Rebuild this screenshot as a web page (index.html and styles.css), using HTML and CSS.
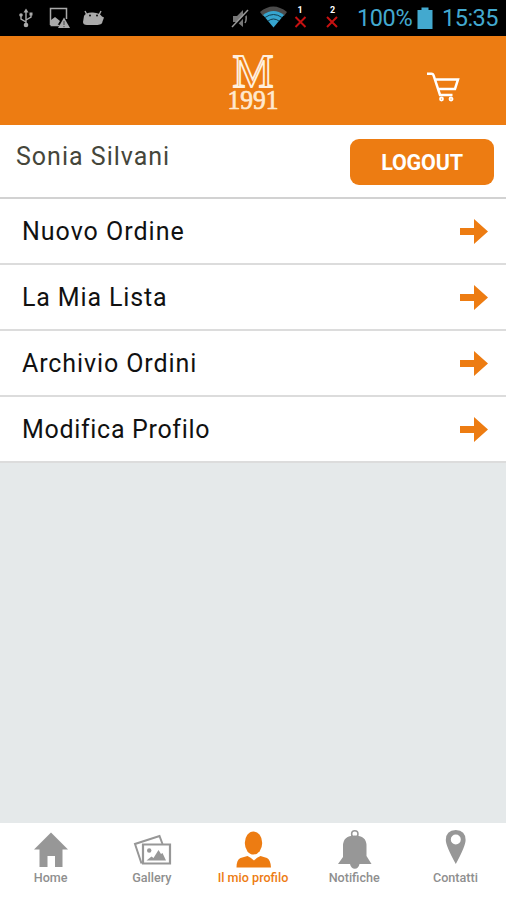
FILE: index.html
```html
<!DOCTYPE html>
<html lang="it">
<head>
  <meta charset="utf-8">
  <title>Il mio profilo</title>
  <link rel="stylesheet" href="styles.css">
</head>
<body>
  <!-- Status bar -->
  <div class="status-bar">
    <svg class="status-icons" width="110" height="36" viewBox="0 0 110 36">
      <g fill="none" stroke="#aaa" stroke-width="1.4">
        <path d="M26 11v14M26 22l-5-3v-4M26 20l5-3v-3"/>
        <path d="M50.500 25V8.500h16V19M50.500 25.500h9" stroke-width="1.500"/>
        <path d="M87 15l-2-4M99 15l2-4"/>
      </g>
      <g fill="#aaa">
        <path d="M23.500 12.500 26 8.500l2.500 4z"/>
        <circle cx="26" cy="25" r="2.300"/>
        <circle cx="21" cy="15" r="1.800"/>
        <path d="M29.500 12.500h3v3h-3z"/>
        <path d="M51 25v-5l4-3 5 4-3 5z"/>
        <path d="M64 17.500 70 28H58z"/>
        <path d="M84 16q2-4 9-3.500t9 4l2 1-1.500 4q0 3-5 3.500H87q-4 0-4-3z"/>
      </g>
      <path d="M64 21v4M64 26v1.200" stroke="#444" stroke-width="1"/>
      <g fill="#111"><circle cx="90" cy="15.500" r="1"/><circle cx="97" cy="15.500" r="1"/></g>
    </svg>
    <svg class="status-icons" width="120" height="36" viewBox="225 0 120 36">
      <path d="M233 16h4l6-6v17l-6-5h-4z" fill="#777"/>
      <path d="M245 14q2.500 4 0 9" fill="none" stroke="#888" stroke-width="1.500"/>
      <path d="M233 28l16-17" stroke="#000" stroke-width="2"/>
      <path d="M232 27l16-17" stroke="#999" stroke-width="1.500"/>
      <path d="M260 12q13-11 27 0l-3 4q-10-8-21 0z" fill="#4b4b4b"/>
      <path d="M263 15q10.500-8 21 0L273.500 27.500z" fill="#36a5cf"/>
      <path d="M265 17.500q8.500-6 17 0M268 21q5.500-4 11 0" fill="none" stroke="#123d4d" stroke-width="1"/>
      <path d="M295.500 17l10 10m0-10-10 10M327 17l10 10m0-10-10 10" stroke="#c61111" stroke-width="2"/>
      <text class="sim" x="297.500" y="13">1</text>
      <text class="sim" x="330" y="13">2</text>
    </svg>
    <span class="percent">100%</span>
    <svg class="battery" width="16" height="23" viewBox="0 0 16 23"><path d="M.500 3h4V.500h7V3h4v19H.500z" fill="#43a9cf"/></svg>
    <span class="clock">15:35</span>
  </div>

  <!-- Header -->
  <div class="header">
    <svg class="logo" width="80" height="89" viewBox="213 36 80 89">
      <text class="logo-letter" x="232.500" y="87" textLength="41" lengthAdjust="spacingAndGlyphs">M</text>
      <text class="logo-year" x="227.500" y="109.300" textLength="51" lengthAdjust="spacingAndGlyphs">1991</text>
    </svg>
    <svg class="cart" width="36" height="32" viewBox="425 70 36 32" fill="none" stroke="#fff" stroke-width="2.500">
      <path d="M427 73.700h4.500q1.500 0 2 1.500L440 95h12.500M434.500 79.500h23.500l-3 9.500H438.500"/>
      <path d="M440 99a1.500 1.500 0 1 0 3 0a1.500 1.500 0 1 0-3 0M449.500 99a1.500 1.500 0 1 0 3 0a1.500 1.500 0 1 0-3 0" stroke-width="1.800"/>
    </svg>
  </div>

  <div class="user-row">
    <span class="user-name">Sonia Silvani</span>
    <button class="btn-logout">LOGOUT</button>
  </div>

  <!-- Menu -->
  <ul class="menu">
    <li><span>Nuovo Ordine</span><svg class="arrow" viewBox="0 0 28 25"><path d="M0 9h14V0l14 12.500L14 25v-9H0z"/></svg></li>
    <li><span class="menu-list">La Mia Lista</span><svg class="arrow" viewBox="0 0 28 25"><path d="M0 9h14V0l14 12.500L14 25v-9H0z"/></svg></li>
    <li><span class="menu-archive">Archivio Ordini</span><svg class="arrow" viewBox="0 0 28 25"><path d="M0 9h14V0l14 12.500L14 25v-9H0z"/></svg></li>
    <li><span class="menu-edit">Modifica Profilo</span><svg class="arrow" viewBox="0 0 28 25"><path d="M0 9h14V0l14 12.500L14 25v-9H0z"/></svg></li>
  </ul>

  <!-- Bottom tabs -->
  <div class="tabs">
    <div class="tab">
      <svg width="44" height="42" viewBox="29 828 44 42"><path d="M51 832.500 68 849.500h-5.500V867H55v-11h-7.500v11h-8v-17.500H34z" fill="#979797"/></svg>
      <span>Home</span>
    </div>
    <div class="tab">
      <svg width="44" height="42" viewBox="130.500 828 44 42">
        <path d="M142 863.500 135.500 844l24.500-8 3 8" fill="none" stroke="#979797" stroke-width="2"/>
        <path d="M143.500 844.500h27v19h-27z" fill="#fff" stroke="#979797" stroke-width="2.200"/>
        <circle cx="149.700" cy="850.500" r="2.200" fill="#979797"/>
        <path d="M147 860.500l5-4 2 1.500 5-8 2.500 4 1.500-1 3.500 7.500z" fill="#979797"/>
      </svg>
      <span>Gallery</span>
    </div>
    <div class="tab active">
      <svg width="44" height="42" viewBox="231 828 44 42">
        <ellipse cx="253.500" cy="843" rx="8.700" ry="11.500"/>
        <path d="M236.500 867.500q0-8 4-9.500l7-2q3 1 6.500 4.500q3-3.500 6.500-4.500l6.500 2q3.500 1.500 4 9.500z"/>
      </svg>
      <span>Il mio profilo</span>
    </div>
    <div class="tab">
      <svg width="44" height="42" viewBox="332 828 44 42" fill="#979797">
        <circle cx="354.800" cy="834" r="3.200" fill="none" stroke="#979797" stroke-width="1.500"/>
        <path d="M343 846q0-10.500 11.800-10.500T366.500 846v10l5 8H359.500q-1 4.800-4.700 4.800T350 864h-12l5-7z"/>
      </svg>
      <span>Notifiche</span>
    </div>
    <div class="tab">
      <svg width="44" height="42" viewBox="433.500 828 44 42"><path d="M456.300 830q-10 .500-10 10 0 6 10 24 9.800-18 9.800-24 0-9.500-9.800-10zm0 4.500a5 5 0 1 1 0 10 5 5 0 1 1 0-10z" fill="#979797" fill-rule="evenodd"/></svg>
      <span>Contatti</span>
    </div>
  </div>
</body>
</html>
```
FILE: styles.css
```css
body {
  font-family: Roboto, "Liberation Sans", sans-serif;
  margin: 0;
  height: 900px;
  display: flex;
  flex-direction: column;
  background-color: #e5e9ea;
  color: #111;
}

.status-bar {
  height: 36px;
  flex: none;
  display: flex;
  align-items: center;
  background-color: #000;
  color: #43a9cf;
  font-size: 23.5px;
}

.status-icons + .status-icons {
  margin-left: 115px;
}

.sim {
  font-size: 9px;
  font-weight: bold;
  fill: #fff;
}

.percent {
  width: 59px;
  margin-left: 12px;
  letter-spacing: -0.4px;
}

.battery {
  margin-left: 1px;
}

.clock {
  margin-left: 9px;
  letter-spacing: -0.5px;
}

.header {
  height: 89px;
  flex: none;
  position: relative;
  display: flex;
  justify-content: center;
  align-items: center;
  background-color: #ed7c12;
}

.logo-letter {
  font: 47px "Liberation Serif", serif;
  fill: #ed7c12;
  stroke: #fff0df;
  stroke-width: 1.8px;
}

.logo-year {
  font: 27px "Liberation Serif", serif;
  fill: #ffe9cf;
  stroke: #ffe9cf;
  stroke-width: 0.7px;
}

.cart {
  position: absolute;
  top: 34px;
  right: 45px;
}

.user-row {
  height: 72px;
  flex: none;
  display: flex;
  justify-content: space-between;
  background-color: #fff;
  border-bottom: 2px solid #d2d2d2;
}

.user-name {
  padding: 17px 0 0 16px;
  font-size: 25px;
  line-height: 30px;
  letter-spacing: 1px;
  color: #45463a;
}

.btn-logout {
  width: 144px;
  height: 46px;
  margin: 13.5px 12px 0 0;
  padding: 1px 0 0;
  border: none;
  border-radius: 9px;
  background-color: #ed7c12;
  color: #fff;
  font: bold 21.5px Roboto, sans-serif;
  letter-spacing: -0.2px;
}

.menu {
  list-style-type: none;
  margin: 0;
  padding: 0;
}

.menu li {
  height: 64px;
  padding: 0 18px 0 22px;
  display: flex;
  justify-content: space-between;
  align-items: center;
  background-color: #fff;
  border-bottom: 2px solid #dcdcdc;
  font-size: 25px;
  letter-spacing: 1px;
}

.menu .menu-list {
  letter-spacing: 0.85px;
}

.menu .menu-archive {
  letter-spacing: 0.9px;
}

.menu .menu-edit {
  letter-spacing: 0.68px;
}

.arrow {
  width: 28px;
  height: 25px;
  fill: #ed7c12;
}

.tabs {
  height: 77px;
  flex: none;
  margin-top: auto;
  display: flex;
  background-color: #fff;
}

.tab {
  flex: 1;
  padding-top: 5px;
  display: flex;
  flex-direction: column;
  align-items: center;
  color: #8f8f8f;
  font-size: 12.6px;
  font-weight: 500;
  white-space: nowrap;
}

.tab span {
  line-height: 16px;
}

.tab.active {
  color: #ed7c12;
  fill: #ed7c12;
}
```
